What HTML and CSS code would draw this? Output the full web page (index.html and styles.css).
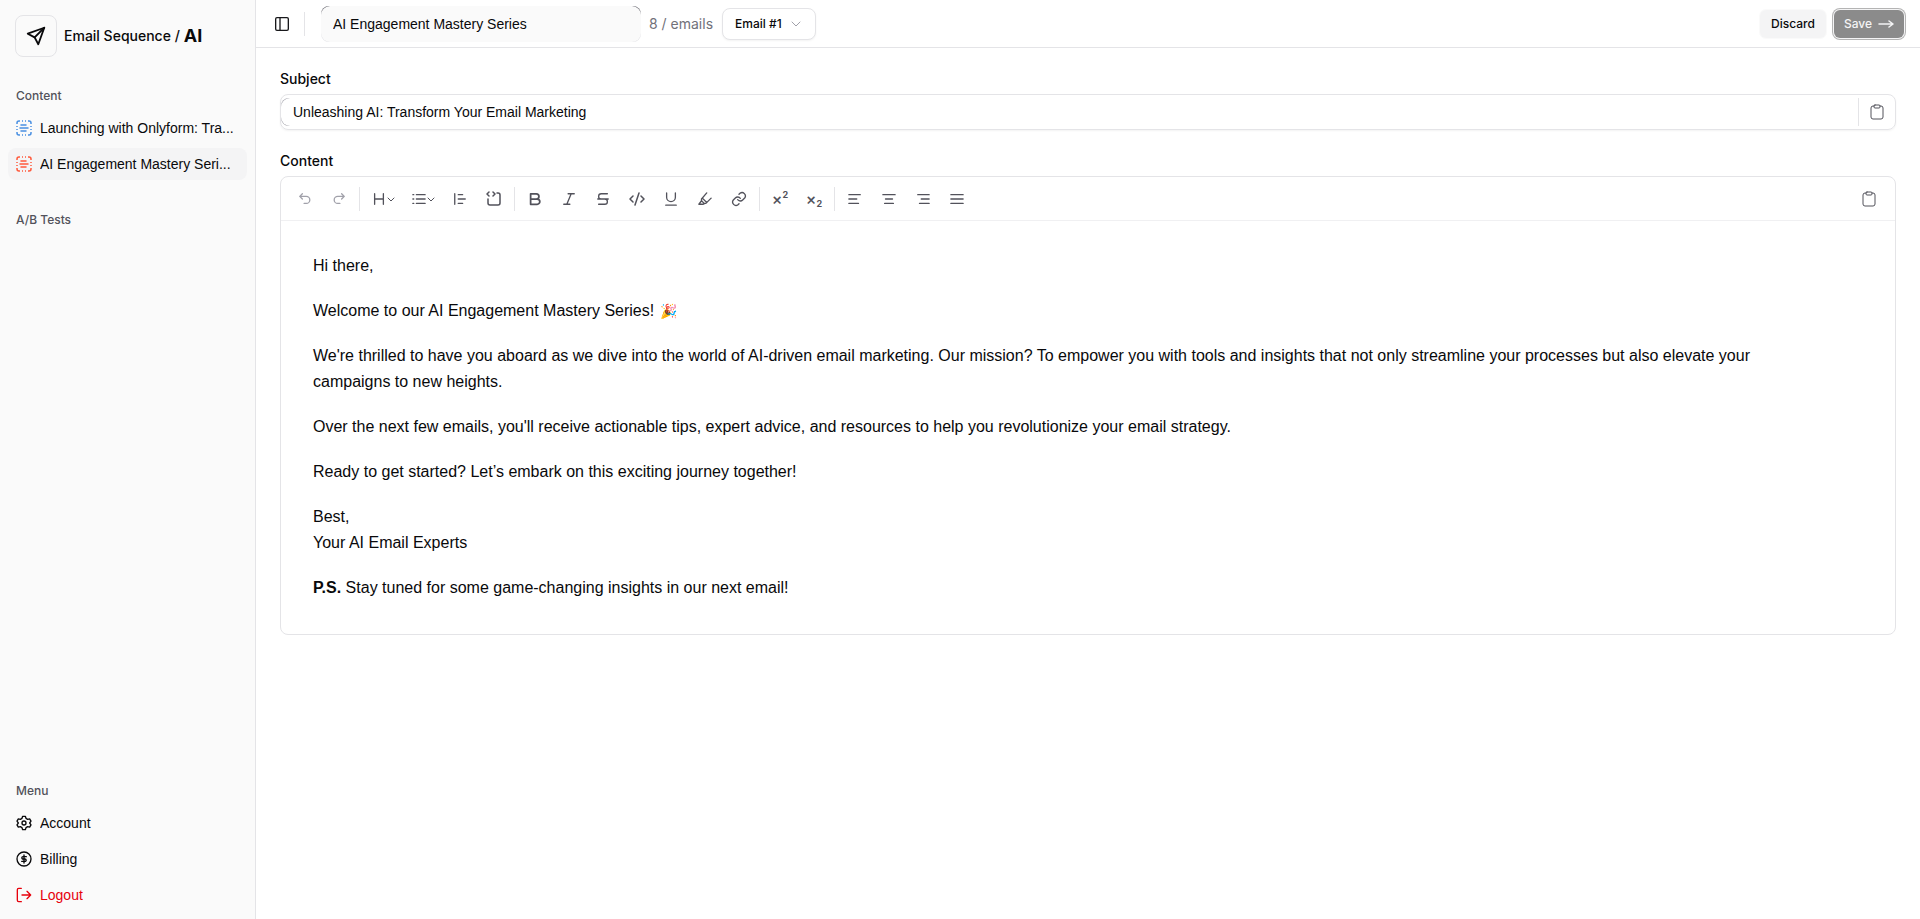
FILE: index.html
```
<!DOCTYPE html>
<html lang="en">

<head>
  <meta charset="utf-8">
  <title>Email Sequence / AI</title>
  <meta name="viewport" content="width=device-width, initial-scale=1">
  <link rel="stylesheet" href="styles.css">
</head>

<body>
  <div class="app">
    <aside class="sidebar">
      <div class="brand">
        <span class="brand-logo">
          <svg class="icon brand-icon" viewBox="0 0 24 24"><path d="M21 3 3 9.500l7.500 4L14.500 21z" /><path d="M21 3 10.500 13.500" /></svg>
        </span>
        <span class="brand-name">Email Sequence /</span>
        <strong class="brand-ai">AI</strong>
      </div>

      <nav class="group">
        <h2 class="group-label">Content</h2>
        <a class="item" href="#launching">
          <svg class="icon blue" viewBox="0 0 16 16"><path class="dashes" d="M1 4V3a2 2 0 0 1 2-2h1M6 1h1M9 1h1M12 1h1a2 2 0 0 1 2 2v1M15 6v1M15 9v1M15 12v1a2 2 0 0 1-2 2h-1M10 15H9M7 15H6M4 15H3a2 2 0 0 1-2-2v-1M1 10V9M1 7V6" /><path d="M5 5h5M4 8h8M5 11h5" /></svg>
          <span class="item-text">Launching with Onlyform: Tra...</span>
        </a>
        <a class="item active" href="#engagement">
          <svg class="icon red" viewBox="0 0 16 16"><path class="dashes" d="M1 4V3a2 2 0 0 1 2-2h1M6 1h1M9 1h1M12 1h1a2 2 0 0 1 2 2v1M15 6v1M15 9v1M15 12v1a2 2 0 0 1-2 2h-1M10 15H9M7 15H6M4 15H3a2 2 0 0 1-2-2v-1M1 10V9M1 7V6" /><path d="M5 5h5M4 8h8M5 11h5" /></svg>
          <span class="item-text">AI Engagement Mastery Seri...</span>
        </a>
      </nav>

      <div class="group">
        <h2 class="group-label">A/B Tests</h2>
      </div>

      <nav class="group menu">
        <h2 class="group-label">Menu</h2>
        <a class="item" href="#account">
          <svg class="icon" viewBox="0 0 24 24"><path d="M10 2h4l1 3 2.500 1.500 3-.700 2 3.500L20.500 12l2 2.700-2 3.500-3-.700L15 19l-1 3h-4l-1-3-2.500-1.500-3 .700-2-3.500L3.500 12l-2-2.700 2-3.500 3 .700L9 5z" /><circle cx="12" cy="12" r="3" /></svg>
          <span class="item-text">Account</span>
        </a>
        <a class="item" href="#billing">
          <svg class="icon" viewBox="0 0 24 24"><circle cx="12" cy="12" r="10.500" /><path d="M15.500 8.500H10.500a1.750 1.750 0 0 0 0 3.500h3a1.750 1.750 0 0 1 0 3.500H8.500M12 6v12" /></svg>
          <span class="item-text">Billing</span>
        </a>
        <a class="item logout" href="#logout">
          <svg class="icon" viewBox="0 0 24 24"><path d="M8 2H4a2 2 0 0 0-2 2v16a2 2 0 0 0 2 2h4M9 12h13M16.500 6.500 22 12l-5.500 5.500" /></svg>
          <span class="item-text">Logout</span>
        </a>
      </nav>
    </aside>

    <main class="main">
      <header class="topbar">
        <button class="tool" type="button" aria-label="Toggle sidebar">
          <svg class="icon dark" viewBox="0 0 24 24"><rect x="2.500" y="2.500" width="19" height="19" rx="2" /><path d="M9 3v18" /></svg>
        </button>
        <span class="divider"></span>
        <div class="title-box">
          <input class="title-input" type="text" aria-label="Series title" value="AI Engagement Mastery Series">
        </div>
        <span class="count">8 / emails</span>
        <div class="select-box">
          <select class="select" aria-label="Email">
            <option>Email #1</option>
          </select>
          <svg class="icon select-arrow" viewBox="0 0 16 16"><path d="m4 6 4 4 4-4" /></svg>
        </div>
        <div class="actions">
          <button class="btn" type="button">Discard</button>
          <button class="btn save" type="button">Save
            <svg class="icon arrow" viewBox="0 0 16 16"><path d="M1 8h14M11 5l4 3-4 3" /></svg>
          </button>
        </div>
      </header>

      <form class="content">
        <label class="label" for="subject">Subject</label>
        <div class="subject">
          <div class="subject-box">
            <input class="subject-input" type="text" id="subject" value="Unleashing AI: Transform Your Email Marketing">
          </div>
          <button class="copy" type="button" aria-label="Copy subject">
            <svg class="icon clipboard" viewBox="0 0 16 16"><path d="M5 2H4a2 2 0 0 0-2 2v9a2 2 0 0 0 2 2h8a2 2 0 0 0 2-2V4a2 2 0 0 0-2-2h-1" /><rect x="5" y="1" width="6" height="3" rx="1" /></svg>
          </button>
        </div>

        <h2 class="label">Content</h2>
        <div class="editor">
          <div class="toolbar">
            <button class="tool faded" type="button" aria-label="Undo"><svg class="icon" viewBox="0 0 16 16"><path d="M5 2 2 5l3 3M2 5h7.500a4 4 0 0 1 0 8H7" /></svg></button>
            <button class="tool faded" type="button" aria-label="Redo"><svg class="icon" viewBox="0 0 16 16"><path d="m11 2 3 3-3 3M14 5H6.500a4 4 0 0 0 0 8H9" /></svg></button>
            <span class="divider"></span>
            <button class="tool wide" type="button" aria-label="Heading"><svg class="icon" viewBox="0 0 16 16"><path d="M3 2v12M13 2v12M3 8h10" /></svg><svg class="icon chevron" viewBox="0 0 8 8"><path d="m1 3 3 3 3-3" /></svg></button>
            <button class="tool wide" type="button" aria-label="List"><svg class="icon" viewBox="0 0 16 16"><path d="M5 3h10M5 8h10M5 13h10M1 3h1M1 8h1M1 13h1" /></svg><svg class="icon chevron" viewBox="0 0 8 8"><path d="m1 3 3 3 3-3" /></svg></button>
            <button class="tool" type="button" aria-label="Blockquote"><svg class="icon" viewBox="0 0 16 16"><path d="M2 2v12M6 3h5M6 8h8M6 13h5" /></svg></button>
            <button class="tool" type="button" aria-label="Code block"><svg class="icon code" viewBox="0 0 16 16"><path d="M3 1 1 3l2 2M7 1l2 2-2 2M2 8v4a2 2 0 0 0 2 2h8a2 2 0 0 0 2-2V4a2 2 0 0 0-2-2h-1" /></svg></button>
            <span class="divider"></span>
            <button class="tool" type="button" aria-label="Bold"><svg class="icon bold" viewBox="0 0 16 16"><path d="M3 2h6.500a3 3 0 0 1 0 6H3zM3 8h7.500a3 3 0 0 1 0 6H3z" /></svg></button>
            <button class="tool" type="button" aria-label="Italic"><svg class="icon" viewBox="0 0 16 16"><path d="M7 2h7M2 14h7M10.500 2l-5 12" /></svg></button>
            <button class="tool" type="button" aria-label="Strikethrough"><svg class="icon" viewBox="0 0 16 16"><path d="M13 2H6a3 3 0 0 0-3 3M2 8h12M3 5a3 3 0 0 0 3 3M10 8a3 3 0 0 1 0 6H3" /></svg></button>
            <button class="tool" type="button" aria-label="Code"><svg class="icon code" viewBox="0 0 16 16"><path d="M4 5 1 8l3 3M12 5l3 3-3 3M10 2 6 14" /></svg></button>
            <button class="tool" type="button" aria-label="Underline"><svg class="icon" viewBox="0 0 16 16"><path d="M3 1v5a5 5 0 0 0 10 0V1M2 15h12" /></svg></button>
            <button class="tool" type="button" aria-label="Highlight"><svg class="icon" viewBox="0 0 16 16"><path d="M10 1 4 8v2l3 3h2l6-6M4 10l-3 4h5l2-1M5 7l5 5" /></svg></button>
            <button class="tool" type="button" aria-label="Link"><svg class="icon code" viewBox="0 0 24 24"><path class="link" d="M10 13a5 5 0 0 0 7.500.500l3-3a5 5 0 0 0-7-7L12 5M14 11a5 5 0 0 0-7.500-.500l-3 3a5 5 0 0 0 7 7L12 19" /></svg></button>
            <span class="divider"></span>
            <button class="tool script" type="button" aria-label="Superscript">×<sup>2</sup></button>
            <button class="tool script" type="button" aria-label="Subscript">×<sub>2</sub></button>
            <span class="divider"></span>
            <button class="tool" type="button" aria-label="Align left"><svg class="icon" viewBox="0 0 16 16"><path d="M1 3h13M1 8h9M1 13h11" /></svg></button>
            <button class="tool" type="button" aria-label="Align center"><svg class="icon" viewBox="0 0 16 16"><path d="M1 3h14M4 8h8M3 13h10" /></svg></button>
            <button class="tool" type="button" aria-label="Align right"><svg class="icon" viewBox="0 0 16 16"><path d="M2 3h13M6 8h9M4 13h11" /></svg></button>
            <button class="tool" type="button" aria-label="Justify"><svg class="icon" viewBox="0 0 16 16"><path d="M1 3h14M1 8h14M1 13h14" /></svg></button>
            <button class="tool last" type="button" aria-label="Copy content"><svg class="icon clipboard" viewBox="0 0 16 16"><path d="M5 2H4a2 2 0 0 0-2 2v9a2 2 0 0 0 2 2h8a2 2 0 0 0 2-2V4a2 2 0 0 0-2-2h-1" /><rect x="5" y="1" width="6" height="3" rx="1" /></svg></button>
          </div>
          <div class="text" contenteditable="true" spellcheck="false">
            <p>Hi there,</p>
            <p>Welcome to our AI Engagement Mastery Series! <span class="emoji">🎉</span></p>
            <p>We're thrilled to have you aboard as we dive into the world of AI-driven email marketing. Our mission? To empower you with tools and insights that not only streamline your processes but also elevate your campaigns to new heights.</p>
            <p>Over the next few emails, you'll receive actionable tips, expert advice, and resources to help you revolutionize your email strategy.</p>
            <p>Ready to get started? Let’s embark on this exciting journey together!</p>
            <p>Best,<br>Your AI Email Experts</p>
            <p><strong>P.S.</strong> Stay tuned for some game-changing insights in our next email!</p>
          </div>
        </div>
      </form>
    </main>
  </div>
</body>

</html>
```
FILE: styles.css
```
* {
  box-sizing: border-box;
}

body {
  margin: 0;
  background-color: white;
  color: #09090b;
  font-family: Inter, "Liberation Sans", "Noto Color Emoji", sans-serif;
  font-size: 14px;
  line-height: 20px;
}

h2,
p {
  margin: 0;
}

button,
input,
select {
  font: inherit;
  color: inherit;
}

button {
  cursor: pointer;
}

.app {
  display: flex;
  min-height: 100vh;
}

/* icons */
.icon {
  flex: none;
  width: 14px;
  height: 14px;
  fill: none;
  stroke: currentColor;
  stroke-width: 1.5;
  stroke-linecap: round;
  stroke-linejoin: round;
}

/* sidebar */
.sidebar {
  display: flex;
  flex-direction: column;
  gap: 8px;
  flex: none;
  width: 256px;
  background-color: #fafafa;
  border-right: 1px solid #e4e4e7;
}

.brand {
  display: flex;
  align-items: center;
  padding: 15px 15px 7px;
  font-weight: 500;
}

.brand-logo {
  display: flex;
  align-items: center;
  justify-content: center;
  width: 42px;
  height: 42px;
  margin-right: 7px;
  border: 1px solid #e4e4e7;
  border-radius: 8px;
}

.brand-icon {
  width: 22px;
  height: 22px;
  stroke-width: 2;
}

.brand-ai {
  margin-left: 4px;
  font-size: 18px;
}

.group {
  display: flex;
  flex-direction: column;
  gap: 4px;
  padding: 8px;
}

.group-label {
  margin-bottom: -4px;
  padding: 0 8px;
  color: #52525b;
  font-size: 12px;
  font-weight: 500;
  line-height: 32px;
}

.item {
  display: flex;
  align-items: center;
  gap: 8px;
  height: 32px;
  padding: 0 8px;
  border-radius: 8px;
  color: #09090b;
  font-family: "Liberation Sans", sans-serif;
  text-decoration: none;
}

.item .icon {
  width: 16px;
  height: 16px;
  stroke-width: 2;
}

.item-text {
  overflow: hidden;
  text-overflow: ellipsis;
  white-space: nowrap;
}

.item.active {
  background-color: #f4f4f5;
}

.item.logout {
  color: #e7000b;
}

.item .blue,
.item .red {
  stroke-width: 1.5;
}

.dashes {
  stroke-linecap: butt;
}

.blue {
  color: #4a90e2;
}

.red {
  color: #ff5a3c;
}

.menu {
  margin-top: auto;
}

/* top bar */
.main {
  flex: 1;
  min-width: 0;
}

.topbar {
  display: flex;
  align-items: center;
  height: 48px;
  padding: 0 16px 0 12px;
  border-bottom: 1px solid #e4e4e7;
}

.topbar .divider {
  margin: 0 16px 0 8px;
}

.dark {
  width: 16px;
  height: 16px;
  color: #18181b;
  stroke-width: 2;
}

.divider {
  flex: none;
  width: 1px;
  height: 24px;
  background-color: #e4e4e7;
}

.title-box {
  display: flex;
  width: 320px;
  height: 36px;
  border-radius: 8px;
  background: linear-gradient(#52525b, #e4e4e7 50%);
}

.title-input {
  width: 100%;
  padding: 0 12px;
  border: none;
  border-radius: 9px;
  background-color: #fafafa;
  font-family: "Liberation Sans", sans-serif;
}

.count {
  margin: 0 9px 0 8px;
  color: #71717a;
}

.select-box {
  display: grid;
  align-items: center;
}

.select {
  grid-area: 1 / 1;
  width: 94px;
  height: 32px;
  padding: 0 12px;
  appearance: none;
  border: 1px solid #e4e4e7;
  border-radius: 8px;
  background-color: white;
  box-shadow: 0 1px 2px rgba(0, 0, 0, 0.05);
  font-size: 12px;
  font-weight: 500;
}

.select-arrow {
  grid-area: 1 / 1;
  justify-self: end;
  width: 16px;
  height: 16px;
  margin-right: 12px;
  color: #a1a1aa;
  stroke-width: 1;
  pointer-events: none;
}

.actions {
  display: flex;
  gap: 8px;
  margin-left: auto;
}

.btn {
  display: flex;
  align-items: center;
  gap: 6px;
  height: 28px;
  padding: 0 11px;
  border: none;
  border-radius: 6px;
  background-color: #f4f4f5;
  box-shadow: 0 0 0 1px #fafafa;
  font-size: 12px;
  font-weight: 500;
}

.btn.save {
  padding: 0 10px;
  background-color: #8b8b8b;
  box-shadow: 0 0 0 1px #f4f4f5, 0 0 0 2px #b4b4b4;
  color: #f4f4f5;
}

.arrow {
  width: 16px;
  height: 16px;
}

/* form */
.content {
  padding: 21px 24px;
}

.label {
  display: block;
  margin-bottom: 5px;
  font-size: 14px;
  font-weight: 500;
}

.subject {
  display: flex;
  align-items: center;
  height: 36px;
  margin-bottom: 21px;
  border: 1px solid #e4e4e7;
  border-radius: 8px;
  box-shadow: 0 1px 2px rgba(0, 0, 0, 0.05);
}

.subject-box {
  display: flex;
  flex: 1;
  height: 28px;
  border-right: 1px solid #e4e4e7;
  border-radius: 8px 0 0 8px;
  background-color: #a1a1aa;
}

.subject-input {
  width: 100%;
  padding: 0 12px;
  border: none;
  border-radius: 9px 0 0 9px;
  background-color: white;
  font-family: "Liberation Sans", sans-serif;
}

.copy {
  display: flex;
  align-items: center;
  justify-content: center;
  width: 36px;
  height: 28px;
  padding: 0;
  border: none;
  background: none;
  color: #52525b;
}

/* editor */
.editor {
  border: 1px solid #e4e4e7;
  border-radius: 8px;
}

.toolbar {
  display: flex;
  align-items: center;
  gap: 6px;
  height: 44px;
  padding: 0 12px 0 10px;
  border-bottom: 1px solid #f0f0f2;
}

.tool {
  display: flex;
  align-items: center;
  justify-content: center;
  flex: none;
  width: 28px;
  height: 28px;
  padding: 0;
  border: none;
  border-radius: 6px;
  background: none;
  color: #52525b;
}

.tool.wide {
  gap: 1px;
  width: 34px;
}

.tool.faded {
  color: #a1a1aa;
}

.tool.last {
  margin-left: auto;
}

.chevron {
  width: 8px;
  height: 8px;
  stroke-width: 1;
}

.bold {
  stroke-width: 2;
}

.code {
  width: 16px;
  height: 16px;
}

.link {
  stroke-width: 2;
}

.clipboard {
  width: 16px;
  height: 16px;
  stroke-width: 1;
}

.script {
  font-size: 16px;
  font-weight: 500;
}

.script sup,
.script sub {
  font-size: 9px;
  font-weight: 700;
  line-height: 8px;
}

.script sup {
  align-self: flex-start;
  padding-top: 6px;
}

.script sub {
  align-self: flex-end;
  padding-bottom: 5px;
}

.text {
  padding: 32px 72px 33px 32px;
  outline: none;
  font-family: "Liberation Sans", "Noto Color Emoji", sans-serif;
  font-size: 16px;
  line-height: 26px;
}

.text p + p {
  margin-top: 19px;
}

.emoji {
  margin-left: 2px;
  font-size: 14px;
}
```
